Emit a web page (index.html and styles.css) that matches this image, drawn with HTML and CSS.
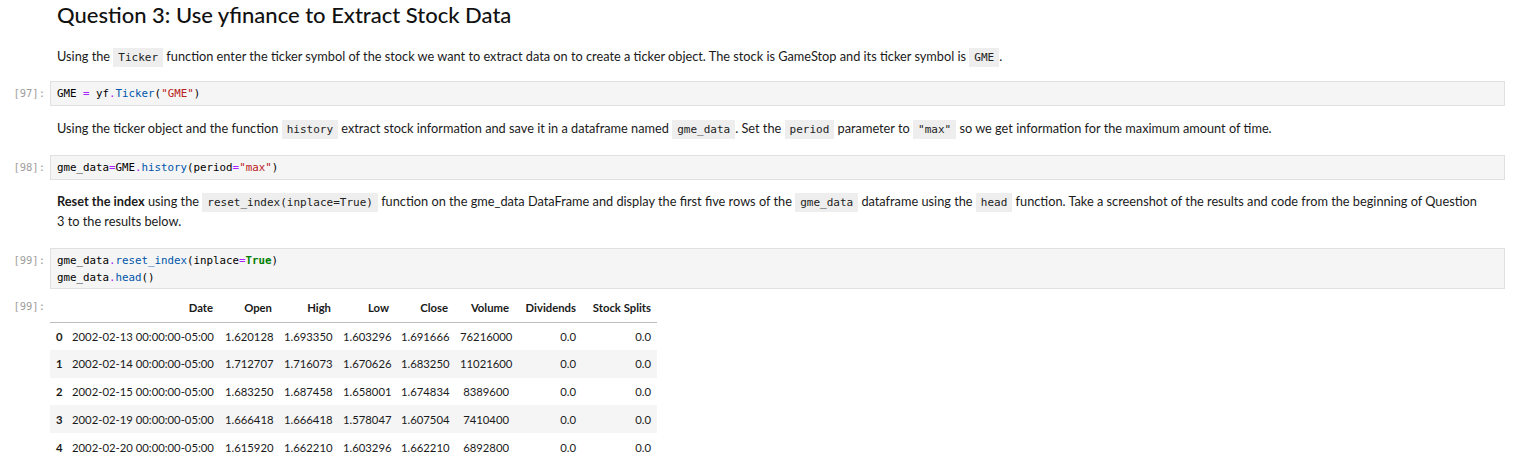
FILE: index.html
```html
<!DOCTYPE html>
<html>
<head>
<meta charset="utf-8">
<link rel="stylesheet" href="styles.css">
</head>
<body>
<div class="nb">
  <div class="cell md">
    <h2 class="title">Question 3: Use yfinance to Extract Stock Data</h2>
  </div>
  <div class="cell md p1">
    <p class="para">Using the <code class="ic">Ticker</code> function enter the ticker symbol of the stock we want to extract data on to create a ticker object. The stock is GameStop and its ticker symbol is <code class="ic">GME</code>.</p>
  </div>
  <div class="cell code c1">
    <div class="prompt">[97]:</div>
    <div class="input"><span class="n">GME</span> <span class="o">=</span> <span class="n">yf</span><span class="o">.</span><span class="p">Ticker</span>(<span class="s">"GME"</span>)</div>
  </div>
  <div class="cell md p2">
    <p class="para">Using the ticker object and the function <code class="ic">history</code> extract stock information and save it in a dataframe named <code class="ic">gme_data</code>. Set the <code class="ic">period</code> parameter to <code class="ic">"max"</code> so we get information for the maximum amount of time.</p>
  </div>
  <div class="cell code c2">
    <div class="prompt">[98]:</div>
    <div class="input"><span class="n">gme_data</span><span class="o">=</span><span class="n">GME</span><span class="o">.</span><span class="p">history</span>(<span class="n">period</span><span class="o">=</span><span class="s">"max"</span>)</div>
  </div>
  <div class="cell md p3">
    <p class="para"><b>Reset the index</b> using the <code class="ic">reset_index(inplace=True)</code> function on the gme_data DataFrame and display the first five rows of the <code class="ic">gme_data</code> dataframe using the <code class="ic">head</code> function. Take a screenshot of the results and code from the beginning of Question 3 to the results below.</p>
  </div>
  <div class="cell code c3">
    <div class="prompt">[99]:</div>
    <div class="input"><span class="n">gme_data</span><span class="o">.</span><span class="p">reset_index</span>(<span class="n">inplace</span><span class="o">=</span><span class="k">True</span>)<br><span class="n">gme_data</span><span class="o">.</span><span class="p">head</span>()</div>
  </div>
  <div class="cell out">
    <div class="prompt">[99]:</div>
    <div class="output">
      <table class="df">
        <thead>
          <tr><th class="w-i"></th><th class="w-date">Date</th><th class="w-n">Open</th><th class="w-n">High</th><th class="w-l">Low</th><th class="w-n">Close</th><th class="w-v">Volume</th><th class="w-d">Dividends</th><th class="w-s">Stock Splits</th></tr>
        </thead>
        <tbody>
          <tr><th>0</th><td>2002-02-13 00:00:00-05:00</td><td>1.620128</td><td>1.693350</td><td>1.603296</td><td>1.691666</td><td>76216000</td><td>0.0</td><td>0.0</td></tr>
          <tr class="alt"><th>1</th><td>2002-02-14 00:00:00-05:00</td><td>1.712707</td><td>1.716073</td><td>1.670626</td><td>1.683250</td><td>11021600</td><td>0.0</td><td>0.0</td></tr>
          <tr><th>2</th><td>2002-02-15 00:00:00-05:00</td><td>1.683250</td><td>1.687458</td><td>1.658001</td><td>1.674834</td><td>8389600</td><td>0.0</td><td>0.0</td></tr>
          <tr class="alt"><th>3</th><td>2002-02-19 00:00:00-05:00</td><td>1.666418</td><td>1.666418</td><td>1.578047</td><td>1.607504</td><td>7410400</td><td>0.0</td><td>0.0</td></tr>
          <tr><th>4</th><td>2002-02-20 00:00:00-05:00</td><td>1.615920</td><td>1.662210</td><td>1.603296</td><td>1.662210</td><td>6892800</td><td>0.0</td><td>0.0</td></tr>
        </tbody>
      </table>
    </div>
  </div>
</div>
</body>
</html>
```

FILE: styles.css
```css
html, body {
  margin: 0;
  padding: 0;
  background: #fff;
}
body {
  font-family: Lato, "Open Sans", sans-serif;
  color: #1a1a1a;
  font-size: 12.75px;
}
.nb {
  padding: 0 11px 0 0;
}
.cell {
  display: flex;
}
.md {
  padding-left: 57px;
  padding-right: 22px;
}
.title {
  margin: 0;
  padding-top: 1px;
  font-size: 22px;
  font-weight: 500;
  line-height: 28px;
  color: #111;
}
.para {
  margin: 0;
  line-height: 20px;
}
.p1 { margin-top: 17px; }
.p2 { margin-top: 12px; }
.p3 { margin-top: 11px; }
.ic {
  font-family: "DejaVu Sans Mono", monospace;
  font-size: 11px;
  line-height: 1;
  background: #eee;
  padding: 3px 5px;
  color: #222;
}
.prompt {
  width: 50px;
  flex: none;
  box-sizing: border-box;
  padding-right: 5px;
  text-align: right;
  font-family: "DejaVu Sans Mono", monospace;
  font-size: 10.5px;
  color: #9e9e9e;
  line-height: 17px;
  padding-top: 4px;
}
.input {
  flex: 1;
  background: #f5f5f5;
  border: 1px solid #e0e0e0;
  padding: 3px 6px 3px 6px;
  font-family: "DejaVu Sans Mono", monospace;
  font-size: 10.8px;
  line-height: 17px;
  color: #000;
}
.c1 { margin-top: 15px; }
.c2 { margin-top: 17px; }
.c3 { margin-top: 17px; }
.c3 .input { padding-bottom: 2px; }
.n { color: #000; }
.o { color: #aa22ff; }
.p { color: #0055aa; }
.s { color: #ba2121; }
.k { color: #008000; font-weight: bold; }
.out { margin-top: 5px; }
.out .prompt { padding-top: 4px; }
.output { flex: 1; }
.df {
  border-collapse: collapse;
  table-layout: fixed;
  width: 606px;
  font-size: 11.3px;
  color: #1a1a1a;
}
.df th, .df td {
  text-align: right;
  padding: 0 6px;
  white-space: nowrap;
  box-sizing: border-box;
}
.df thead th {
  font-weight: bold;
  height: 28px;
  border-bottom: 1px solid #bdbdbd;
  vertical-align: middle;
}
.w-i { width: 16px; }
.w-date { width: 153px; }
.w-n { width: 59px; }
.w-l { width: 58px; }
.w-v { width: 61px; }
.w-d { width: 67px; }
.w-s { width: 75px; }
.df tbody th {
  font-weight: bold;
  text-align: left;
}
.df tbody tr {
  height: 27.8px;
}
.df tbody tr.alt {
  background: #f5f5f5;
}
```
